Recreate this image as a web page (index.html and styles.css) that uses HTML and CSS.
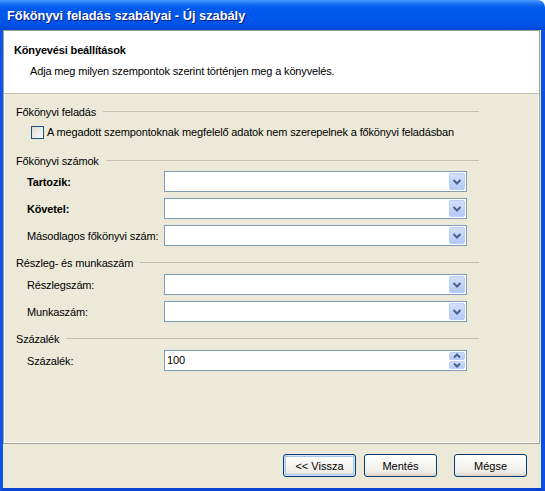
FILE: index.html
```html
<!DOCTYPE html>
<html lang="hu">
<head>
<meta charset="utf-8">
<title>Főkönyvi feladás szabályai - Új szabály</title>
<link rel="stylesheet" href="styles.css">
</head>
<body>
<div class="window">
  <div class="titlebar"><span class="title">Főkönyvi feladás szabályai - Új szabály</span></div>
  <div class="frame">
    <div class="client">
      <div class="panel">
        <div class="header">
          <div class="header-title">Könyevési beállítások</div>
          <div class="header-sub">Adja meg milyen szempontok szerint történjen meg a könyvelés.</div>
        </div>
        <div class="body">
          <div class="group-title g1"><span>Főkönyvi feladás</span></div>
          <div class="check-row"><span class="checkbox"></span><span class="check-label">A megadott szempontoknak megfelelő adatok nem szerepelnek a főkönyvi feladásban</span></div>

          <div class="group-title g2"><span>Főkönyvi számok</span></div>
          <div class="field first"><span class="label bold">Tartozik:</span><div class="combo"><div class="combo-text"></div><span class="drop"><svg width="16" height="17" viewBox="0 0 16 17"><path d="M4.5 7 L8 10.5 L11.5 7" fill="none" stroke="#4d6185" stroke-width="2"/></svg></span></div></div>
          <div class="field"><span class="label bold">Követel:</span><div class="combo"><div class="combo-text"></div><span class="drop"><svg width="16" height="17" viewBox="0 0 16 17"><path d="M4.5 7 L8 10.5 L11.5 7" fill="none" stroke="#4d6185" stroke-width="2"/></svg></span></div></div>
          <div class="field"><span class="label">Másodlagos főkönyvi szám:</span><div class="combo"><div class="combo-text"></div><span class="drop"><svg width="16" height="17" viewBox="0 0 16 17"><path d="M4.5 7 L8 10.5 L11.5 7" fill="none" stroke="#4d6185" stroke-width="2"/></svg></span></div></div>

          <div class="group-title g3"><span>Részleg- és munkaszám</span></div>
          <div class="field first"><span class="label">Részlegszám:</span><div class="combo"><div class="combo-text"></div><span class="drop"><svg width="16" height="17" viewBox="0 0 16 17"><path d="M4.5 7 L8 10.5 L11.5 7" fill="none" stroke="#4d6185" stroke-width="2"/></svg></span></div></div>
          <div class="field"><span class="label">Munkaszám:</span><div class="combo"><div class="combo-text"></div><span class="drop"><svg width="16" height="17" viewBox="0 0 16 17"><path d="M4.5 7 L8 10.5 L11.5 7" fill="none" stroke="#4d6185" stroke-width="2"/></svg></span></div></div>

          <div class="group-title g3"><span>Százalék</span></div>
          <div class="field first"><span class="label">Százalék:</span><div class="combo spin"><div class="combo-text">100</div><span class="spin-btns"><span class="spin-btn"><svg width="16" height="8" viewBox="0 0 16 8"><path d="M5 5.5 L8 2.5 L11 5.5" fill="none" stroke="#4d6185" stroke-width="2"/></svg></span><span class="spin-btn"><svg width="16" height="8" viewBox="0 0 16 8"><path d="M5 2.5 L8 5.5 L11 2.5" fill="none" stroke="#4d6185" stroke-width="2"/></svg></span></span></div></div>
        </div>
      </div>
      <div class="buttons">
        <button class="btn default">&lt;&lt; Vissza</button>
        <button class="btn">Mentés</button>
        <button class="btn last">Mégse</button>
      </div>
    </div>
  </div>
</div>
</body>
</html>
```

FILE: styles.css
```css
html, body {
  margin: 0;
  padding: 0;
  background: #ffffff;
}
.window {
  width: 545px;
  height: 491px;
  display: flex;
  flex-direction: column;
  font-family: "Liberation Sans", Arial, sans-serif;
  font-size: 11px;
  letter-spacing: -0.15px;
  color: #000;
}
.titlebar {
  height: 30px;
  flex: none;
  border-top-right-radius: 7px;
  background: linear-gradient(to bottom, #4496fc 0, #2f84fa 2px, #1068ee 5px, #0059ef 9px, #0056ea 20px, #0051e2 26px, #0846d4 30px);
  display: flex;
  align-items: center;
  padding-left: 7px;
}
.title {
  color: #fff;
  font-weight: bold;
  font-size: 12.8px;
  letter-spacing: 0;
  text-shadow: 1px 1px 0 #0a1883;
  padding-top: 1px;
}
.frame {
  flex: 1;
  display: flex;
  border-left: 3px solid #0c55e6;
  border-right: 4px solid #0b52e0;
  border-bottom: 3px solid #0a43d0;
}
.client {
  flex: 1;
  display: flex;
  flex-direction: column;
  background: #ece9d8;
}
.panel {
  height: 412px;
  margin-right: 1px;
  border: 1px solid #a09f98;
  box-shadow: inset 0 0 0 1px #fff;
  display: flex;
  flex-direction: column;
}
.header {
  height: 63px;
  flex: none;
  background: #fff;
  border-bottom: 1px solid #c5c2b2;
  padding-left: 10px;
  box-sizing: border-box;
  padding-top: 12px;
}
.header-title {
  font-weight: bold;
  line-height: 14px;
  height: 14px;
}
.header-sub {
  margin-top: 7px;
  padding-left: 16px;
  line-height: 14px;
}
.body {
  padding: 0 60px 0 12px;
}
.group-title {
  height: 14px;
  line-height: 14px;
  display: flex;
  align-items: center;
  color: #000;
}
.group-title::after {
  content: "";
  flex: 1;
  border-top: 1px solid #c2bfae;
  margin-left: 7px;
  margin-top: -1px;
}
.g1 { margin-top: 11px; }
.g2 { margin-top: 15px; }
.g3 { margin-top: 10px; }
.check-row {
  margin-top: 7px;
  height: 13px;
  display: flex;
  align-items: center;
  padding-left: 15px;
}
.checkbox {
  width: 11px;
  height: 11px;
  border: 1px solid #1c5180;
  background: linear-gradient(135deg, #dcdcd7 0%, #f0f0ea 60%, #fff 100%);
  flex: none;
}
.check-label {
  margin-left: 3px;
  line-height: 13px;
}
.field {
  display: flex;
  align-items: center;
  height: 21px;
  margin-top: 6px;
  padding-left: 11px;
}
.field.first { margin-top: 3px; }
.g3 + .field.first { margin-top: 4px; }
.label {
  width: 137px;
  flex: none;
}
.bold { font-weight: bold; }
.combo {
  width: 303px;
  height: 21px;
  box-sizing: border-box;
  border: 1px solid #7f9db9;
  background: #fff;
  display: flex;
  align-items: stretch;
  padding: 1px 1px 1px 2px;
}
.combo-text {
  flex: 1;
  line-height: 17px;
}
.drop {
  width: 16px;
  height: 17px;
  box-sizing: border-box;
  border: 1px solid #b9cdf7;
  border-radius: 2px;
  background: linear-gradient(to bottom, #d2defa 0%, #c4d5fb 50%, #b4c8f6 100%);
  display: block;
  position: relative;
}
.drop svg {
  position: absolute;
  left: -1px;
  top: -1px;
}
.spin-btns {
  width: 16px;
  display: flex;
  flex-direction: column;
  gap: 1px;
}
.spin-btn {
  flex: 1;
  box-sizing: border-box;
  border: 1px solid #b9cdf7;
  border-radius: 2px;
  background: linear-gradient(to bottom, #d2defa 0%, #c4d5fb 50%, #b4c8f6 100%);
  position: relative;
}
.spin-btn svg {
  position: absolute;
  left: -1px;
  top: -1px;
}
.buttons {
  flex: 1;
  display: flex;
  justify-content: flex-end;
  align-items: flex-start;
  padding-top: 10px;
  padding-right: 14px;
}
.btn {
  width: 73px;
  height: 23px;
  border: 1px solid #003c74;
  border-radius: 3px;
  background: linear-gradient(to bottom, #ffffff 0%, #f6f6f3 40%, #efeee9 80%, #d8d3c8 100%);
  font-family: "Liberation Sans", Arial, sans-serif;
  font-size: 11px;
  color: #000;
  padding: 0;
  margin-left: 8px;
}
.btn.last { margin-left: 17px; }
.btn.default {
  box-shadow: inset 0 0 0 1px #cee7ff, inset 0 0 0 2px #a9c4ef;
}
```
